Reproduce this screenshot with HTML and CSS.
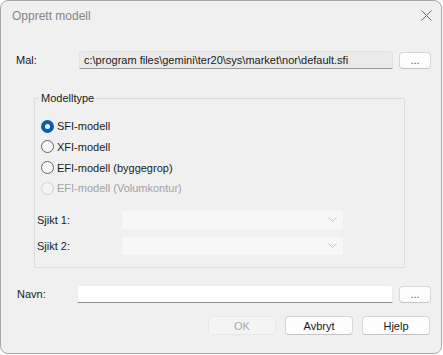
FILE: index.html
```html
<!DOCTYPE html>
<html>
<head>
<meta charset="utf-8">
<link rel="stylesheet" href="styles.css">
</head>
<body>
<div class="window">
  <div class="titlebar">
    <span class="title">Opprett modell</span>
    <span class="close">
      <svg width="11" height="11" viewBox="0 0 11 11"><path d="M0.5 0.5 L10.5 10.5 M10.5 0.5 L0.5 10.5" stroke="#6a6a6a" stroke-width="1" fill="none"/></svg>
    </span>
  </div>
  <div class="content">
    <div class="row mal-row">
      <span class="label mal-label">Mal:</span>
      <div class="field readonly">c:\program files\gemini\ter20\sys\market\nor\default.sfi</div>
      <button class="btn small">...</button>
    </div>

    <fieldset class="group">
      <legend>Modelltype</legend>
      <div class="radios">
        <div class="radio-row"><span class="radio checked"></span><span>SFI-modell</span></div>
        <div class="radio-row"><span class="radio"></span><span>XFI-modell</span></div>
        <div class="radio-row"><span class="radio"></span><span>EFI-modell (byggegrop)</span></div>
        <div class="radio-row disabled"><span class="radio"></span><span>EFI-modell (Volumkontur)</span></div>
      </div>
      <div class="combos">
        <div class="combo-row">
          <span class="label sjikt-label">Sjikt 1:</span>
          <div class="combo"><svg width="9" height="5" viewBox="0 0 9 5"><path d="M0.5 0.5 L4.5 4.5 L8.5 0.5" stroke="#c4c4c4" fill="none"/></svg></div>
        </div>
        <div class="combo-row">
          <span class="label sjikt-label">Sjikt 2:</span>
          <div class="combo"><svg width="9" height="5" viewBox="0 0 9 5"><path d="M0.5 0.5 L4.5 4.5 L8.5 0.5" stroke="#c4c4c4" fill="none"/></svg></div>
        </div>
      </div>
    </fieldset>

    <div class="row navn-row">
      <span class="label navn-label">Navn:</span>
      <div class="field edit"></div>
      <button class="btn small">...</button>
    </div>

    <div class="buttons">
      <button class="btn action disabled">OK</button>
      <button class="btn action">Avbryt</button>
      <button class="btn action">Hjelp</button>
    </div>
  </div>
</div>
</body>
</html>
```

FILE: styles.css
```css
* { box-sizing: border-box; }
html, body { margin: 0; padding: 0; background: #ffffff; }
body {
  font-family: Tahoma, "Liberation Sans", Arial, sans-serif;
  font-size: 11px;
  color: #1b1b1b;
}
.window {
  width: 442px;
  height: 354px;
  border: 1px solid #a9a9a9;
  border-radius: 8px;
  background: #f0f0f0;
  display: flex;
  flex-direction: column;
  overflow: hidden;
}
.titlebar {
  height: 30px;
  display: flex;
  align-items: center;
  justify-content: space-between;
  padding: 0 9px 0 11px;
}
.title {
  font-size: 12px;
  color: #858585;
  margin-top: -1px;
}
.close {
  display: flex;
  margin-top: -1px;
}
.content {
  display: flex;
  flex-direction: column;
  padding: 20px 0 0 0;
}
.row {
  display: flex;
  align-items: center;
  height: 18px;
}
.label { white-space: nowrap; }
.mal-label { width: 63px; margin-left: 15px; }
.navn-label { width: 60px; margin-left: 16px; }
.field {
  height: 18px;
  display: flex;
  align-items: center;
  padding-left: 4px;
  white-space: nowrap;
  overflow: hidden;
}
.readonly {
  width: 314px;
  background: #e9e9e9;
  border: 1px solid #e2e2e2;
  border-bottom: 1px solid #9a9a9a;
  border-radius: 3px 3px 0 0;
}
.edit {
  width: 316px;
  background: #ffffff;
  border: 1px solid #ececec;
  border-bottom: 1px solid #8c8c8c;
  border-radius: 3px 3px 0 0;
}
.btn {
  font-family: inherit;
  font-size: 11px;
  color: #1b1b1b;
  background: #fdfdfd;
  border: 1px solid #d6d6d6;
  border-bottom-color: #c4c4c4;
  border-radius: 4px;
  padding: 0;
  margin: 0;
}
.btn.small {
  width: 32px;
  height: 17px;
  margin-left: 6px;
  color: #3a5a8a;
  line-height: 13px;
}
.group {
  margin: 23px 0 0 33px;
  width: 371px;
  height: 176px;
  border: 1px solid #dcdcdc;
  border-radius: 1px;
  padding: 11px 0 0 0;
  min-width: 0;
}
.group legend {
  padding: 0 2px;
  margin-left: 4px;
  line-height: 13px;
}
.radios {
  display: flex;
  flex-direction: column;
  padding-left: 6px;
}
.radio-row {
  display: flex;
  align-items: center;
  height: 20.67px;
  gap: 3px;
}
.radio {
  width: 13px;
  height: 13px;
  border-radius: 50%;
  border: 1px solid #656565;
  background: #f6f6f6;
  flex: none;
}
.radio.checked {
  border: 4px solid #005fb8;
  background: #ffffff;
}
.radio-row.disabled { color: #a3a3a3; }
.radio-row.disabled .radio { border-color: #cfcfcf; background: #f3f3f3; }
.combos {
  display: flex;
  flex-direction: column;
  gap: 8px;
  margin-top: 12px;
}
.combo-row {
  display: flex;
  align-items: center;
  height: 18px;
}
.sjikt-label { width: 85px; margin-left: 2px; }
.combo {
  width: 221px;
  height: 18px;
  background: #f7f7f7;
  border-radius: 2px;
  display: flex;
  align-items: center;
  justify-content: flex-end;
  padding-right: 6px;
}
.navn-row { margin-top: 17px; }
.buttons {
  display: flex;
  justify-content: flex-end;
  gap: 9px;
  margin-top: 13px;
  padding-right: 11px;
}
.btn.action {
  width: 68px;
  height: 19px;
}
.btn.action.disabled {
  background: #f4f4f4;
  border-color: #e8e8e8;
  color: #a8a8a8;
}
```
